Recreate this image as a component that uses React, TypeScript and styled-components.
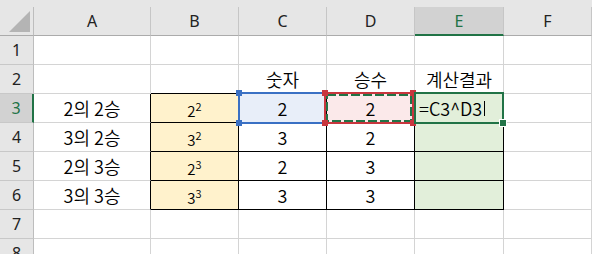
import React from 'react';
import styled, { createGlobalStyle } from 'styled-components';

const GlobalStyle = createGlobalStyle`
  html, body {
    margin: 0;
    padding: 0;
    background: #ffffff;
  }
  body {
    width: 592px;
    height: 254px;
    overflow: hidden;
  }
`;

const COLS = ['A', 'B', 'C', 'D', 'E', 'F'];
const ROWS = [1, 2, 3, 4, 5, 6, 7, 8];

const headings: Record<string, string> = { C: '숫자', D: '승수', E: '계산결과' };

const powers = [
  { row: 3, label: '2의 2승', base: '2', exp: '2' },
  { row: 4, label: '3의 2승', base: '3', exp: '2' },
  { row: 5, label: '2의 3승', base: '2', exp: '3' },
  { row: 6, label: '3의 3승', base: '3', exp: '3' },
];

const GREEN = '#217346';
const BLUE = '#3a70c4';
const RED = '#c8363e';

const Frame = styled.div`
  width: 592px;
  height: 254px;
  overflow: hidden;
  padding-top: 7px;
  box-sizing: border-box;
  background: #e6e6e6;
`;

const Sheet = styled.div`
  display: grid;
  grid-template-columns: 34px 117px 88px 88px 88px 89px 88px;
  grid-auto-rows: 29px;
  background: #ffffff;
  font-family: 'Noto Sans CJK KR', 'Noto Sans', sans-serif;
`;

const Corner = styled.div`
  box-sizing: border-box;
  background: #e6e6e6;
  border-right: 1px solid #bdbdbd;
  border-bottom: 1px solid #ababab;
  display: flex;
  align-items: flex-end;
  justify-content: flex-end;
  padding: 0 3px 3px 0;
`;

const CornerMark = styled.div`
  width: 21px;
  height: 21px;
  background: #b4b4b4;
  clip-path: polygon(100% 0, 100% 100%, 0 100%);
`;

const ColHead = styled.div<{ $active?: boolean }>`
  box-sizing: border-box;
  background: ${({ $active }) => ($active ? '#d2d2d2' : '#e6e6e6')};
  border-right: 1px solid #c6c6c6;
  border-bottom: ${({ $active }) => ($active ? `2px solid ${GREEN}` : '1px solid #ababab')};
  display: flex;
  align-items: center;
  justify-content: center;
  font-family: 'Noto Sans', sans-serif;
  font-size: 16px;
  color: ${({ $active }) => ($active ? GREEN : '#222222')};
`;

const RowHead = styled.div<{ $active?: boolean }>`
  box-sizing: border-box;
  background: ${({ $active }) => ($active ? '#d2d2d2' : '#e6e6e6')};
  border-right: ${({ $active }) => ($active ? `2px solid ${GREEN}` : '1px solid #bdbdbd')};
  border-bottom: 1px solid #c8c8c8;
  display: flex;
  align-items: center;
  justify-content: center;
  font-family: 'Noto Sans', sans-serif;
  font-size: 16px;
  color: ${({ $active }) => ($active ? GREEN : '#222222')};
`;

const Cell = styled.div<{ $bg?: string; $right?: string; $bottom?: string; $left?: boolean }>`
  position: relative;
  box-sizing: border-box;
  background: ${({ $bg }) => $bg ?? '#ffffff'};
  border-right: 1px solid ${({ $right }) => $right ?? '#d4d4d4'};
  border-bottom: 1px solid ${({ $bottom }) => $bottom ?? '#d4d4d4'};
  display: flex;
  align-items: center;
  justify-content: ${({ $left }) => ($left ? 'flex-start' : 'center')};
  padding-left: ${({ $left }) => ($left ? '4px' : '0')};
  font-size: 18px;
  font-weight: 350;
  color: #000000;
  white-space: nowrap;
`;

const Power = styled.span`
  font-size: 15px;
  line-height: 1;
  padding-top: 4px;
`;

const Sup = styled.sup`
  font-size: 11px;
  vertical-align: 6px;
  line-height: 0;
`;

const Caret = styled.span`
  display: inline-block;
  width: 1px;
  height: 15px;
  background: #000000;
  margin-left: 2px;
`;

const RefBox = styled.div<{ $color: string; $left: number; $width: number }>`
  position: absolute;
  z-index: 2;
  left: ${({ $left }) => $left}px;
  top: -2px;
  width: ${({ $width }) => $width}px;
  height: 32px;
  box-sizing: border-box;
  border: 2px solid ${({ $color }) => $color};
  pointer-events: none;
`;

const Marquee = styled.svg`
  position: absolute;
  inset: 0;
  width: 100%;
  height: 100%;
  overflow: visible;
`;

const Handle = styled.span<{ $color: string; $x: 'l' | 'r'; $y: 't' | 'b' }>`
  position: absolute;
  width: 6px;
  height: 6px;
  background: ${({ $color }) => $color};
  ${({ $x }) => ($x === 'l' ? 'left: -4px;' : 'right: -4px;')}
  ${({ $y }) => ($y === 't' ? 'top: -4px;' : 'bottom: -4px;')}
`;

const FillHandle = styled.span`
  position: absolute;
  right: -4px;
  bottom: -4px;
  width: 6px;
  height: 6px;
  background: ${GREEN};
  box-shadow: 0 0 0 1px #ffffff;
`;

const corners: Array<['l' | 'r', 't' | 'b']> = [
  ['l', 't'],
  ['l', 'b'],
  ['r', 't'],
  ['r', 'b'],
];

function renderCell(row: number, ci: number) {
  const col = COLS[ci];
  const p = powers.find((x) => x.row === row);
  const inBox = row >= 3 && row <= 6;
  const right = inBox && ci <= 4 ? '#000000' : undefined;
  const bottom = ci >= 1 && ci <= 4 && row >= 2 && row <= 6 ? '#000000' : undefined;
  const key = `${col}${row}`;

  let bg: string | undefined;
  if (inBox && col === 'B') bg = '#fff2cc';
  if (inBox && col === 'E') bg = '#e2efda';
  if (key === 'C3') bg = '#e8eef9';
  if (key === 'D3') bg = '#fbe9ea';

  let content: React.ReactNode = null;
  if (row === 2 && headings[col]) content = headings[col];
  if (p && col === 'A') content = p.label;
  if (p && col === 'B')
    content = (
      <Power>
        {p.base}
        <Sup>{p.exp}</Sup>
      </Power>
    );
  if (p && col === 'C') content = p.base;
  if (p && col === 'D') content = p.exp;

  return (
    <Cell key={key} $bg={bg} $right={right} $bottom={bottom} $left={key === 'E3'}>
      {key === 'E3' ? (
        <>
          =C3^D3
          <Caret />
        </>
      ) : (
        content
      )}
      {key === 'C3' && (
        <RefBox $color={BLUE} $left={-1} $width={88}>
          {corners.map(([x, y]) => (
            <Handle key={x + y} $color={BLUE} $x={x} $y={y} />
          ))}
        </RefBox>
      )}
      {key === 'D3' && (
        <RefBox $color={RED} $left={-3} $width={90}>
          <Marquee>
            <rect
              x="1"
              y="1"
              width="84"
              height="26"
              fill="none"
              stroke={GREEN}
              strokeWidth="2"
              strokeDasharray="9 3"
            />
          </Marquee>
          {corners.map(([x, y]) => (
            <Handle key={x + y} $color={RED} $x={x} $y={y} />
          ))}
        </RefBox>
      )}
      {key === 'E3' && (
        <RefBox $color={GREEN} $left={-1} $width={90}>
          <FillHandle />
        </RefBox>
      )}
    </Cell>
  );
}

export default function App() {
  return (
    <>
      <GlobalStyle />
      <Frame>
        <Sheet>
          <Corner>
            <CornerMark />
          </Corner>
          {COLS.map((c) => (
            <ColHead key={c} $active={c === 'E'}>
              {c}
            </ColHead>
          ))}
          {ROWS.map((r) => (
            <React.Fragment key={r}>
              <RowHead $active={r === 3}>{r}</RowHead>
              {COLS.map((_, ci) => renderCell(r, ci))}
            </React.Fragment>
          ))}
        </Sheet>
      </Frame>
    </>
  );
}
